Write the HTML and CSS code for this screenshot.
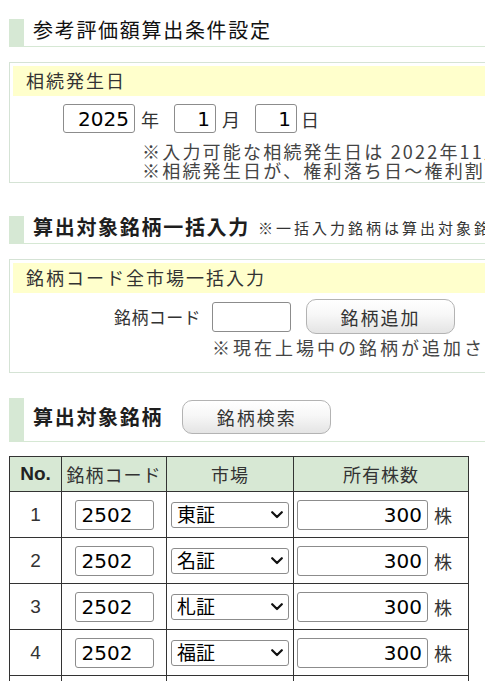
FILE: index.html
```html
<!DOCTYPE html>
<html lang="ja">
<head>
<meta charset="utf-8">
<title>参考評価額算出条件設定</title>
<link rel="stylesheet" href="styles.css">
</head>
<body>
<div class="page">
  <h2 class="heading h-first"><span class="heading-text light">参考評価額算出条件設定</span></h2>

  <div class="box box-date">
    <div class="box-title">相続発生日</div>
    <div class="date-row">
      <input class="field year" type="text" value="2025"><span class="unit">年</span>
      <input class="field md" type="text" value="1"><span class="unit">月</span>
      <input class="field md" type="text" value="1"><span class="unit tight">日</span>
    </div>
    <div class="notes">
      <p>※入力可能な相続発生日は 2022年11月1日〜2025年10月31日です。</p>
      <p>※相続発生日が、権利落ち日〜権利割当日の場合は、権利落ち前の株数を入力してください。</p>
    </div>
  </div>

  <h2 class="heading h-second"><span class="heading-text">算出対象銘柄一括入力</span><span class="heading-note">※一括入力銘柄は算出対象銘柄に追加されます。</span></h2>

  <div class="box box-code">
    <div class="box-title">銘柄コード全市場一括入力</div>
    <div class="code-row">
      <span class="code-label">銘柄コード</span>
      <input class="field code-bulk" type="text" value="">
      <button class="btn btn-add" type="button">銘柄追加</button>
    </div>
    <p class="code-note">※現在上場中の銘柄が追加されます。</p>
  </div>

  <h2 class="heading h-third"><span class="heading-text">算出対象銘柄</span><button class="btn btn-search" type="button">銘柄検索</button></h2>

  <table class="stocks">
    <colgroup>
      <col class="c-no"><col class="c-code"><col class="c-market"><col class="c-qty">
    </colgroup>
    <thead>
      <tr><th class="th-no">No.</th><th>銘柄コード</th><th>市場</th><th>所有株数</th></tr>
    </thead>
    <tbody>
      <tr>
        <td class="no">1</td>
        <td class="center"><input class="field code" type="text" value="2502"></td>
        <td><div class="sel"><select><option>東証</option><option>名証</option><option>札証</option><option>福証</option></select><svg class="chev" width="12" height="8" viewBox="0 0 12 8"><path d="M1.2 1.2 6 6 10.8 1.2" fill="none" stroke="#111" stroke-width="2.2" stroke-linecap="round" stroke-linejoin="round"/></svg></div></td>
        <td><div class="qty"><input class="field num" type="text" value="300"><span class="kabu">株</span></div></td>
      </tr>
      <tr>
        <td class="no">2</td>
        <td class="center"><input class="field code" type="text" value="2502"></td>
        <td><div class="sel"><select><option>名証</option><option>東証</option><option>札証</option><option>福証</option></select><svg class="chev" width="12" height="8" viewBox="0 0 12 8"><path d="M1.2 1.2 6 6 10.8 1.2" fill="none" stroke="#111" stroke-width="2.2" stroke-linecap="round" stroke-linejoin="round"/></svg></div></td>
        <td><div class="qty"><input class="field num" type="text" value="300"><span class="kabu">株</span></div></td>
      </tr>
      <tr>
        <td class="no">3</td>
        <td class="center"><input class="field code" type="text" value="2502"></td>
        <td><div class="sel"><select><option>札証</option><option>東証</option><option>名証</option><option>福証</option></select><svg class="chev" width="12" height="8" viewBox="0 0 12 8"><path d="M1.2 1.2 6 6 10.8 1.2" fill="none" stroke="#111" stroke-width="2.2" stroke-linecap="round" stroke-linejoin="round"/></svg></div></td>
        <td><div class="qty"><input class="field num" type="text" value="300"><span class="kabu">株</span></div></td>
      </tr>
      <tr>
        <td class="no">4</td>
        <td class="center"><input class="field code" type="text" value="2502"></td>
        <td><div class="sel"><select><option>福証</option><option>東証</option><option>名証</option><option>札証</option></select><svg class="chev" width="12" height="8" viewBox="0 0 12 8"><path d="M1.2 1.2 6 6 10.8 1.2" fill="none" stroke="#111" stroke-width="2.2" stroke-linecap="round" stroke-linejoin="round"/></svg></div></td>
        <td><div class="qty"><input class="field num" type="text" value="300"><span class="kabu">株</span></div></td>
      </tr>
      <tr>
        <td class="no">5</td>
        <td class="center"><input class="field code" type="text" value=""></td>
        <td><div class="sel"><select><option>東証</option><option>名証</option><option>札証</option><option>福証</option></select><svg class="chev" width="12" height="8" viewBox="0 0 12 8"><path d="M1.2 1.2 6 6 10.8 1.2" fill="none" stroke="#111" stroke-width="2.2" stroke-linecap="round" stroke-linejoin="round"/></svg></div></td>
        <td><div class="qty"><input class="field num" type="text" value=""><span class="kabu">株</span></div></td>
      </tr>
    </tbody>
  </table>
</div>
</body>
</html>
```

FILE: styles.css
```css
html, body {
  margin: 0;
  padding: 0;
  overflow: hidden;
  background: #fff;
}

body {
  font-family: "Noto Sans CJK JP", "Noto Sans", sans-serif;
  color: #333;
}

.page {
  width: 720px;
  padding: 0 0 40px 9px;
}

p {
  margin: 0;
}

/* headings */
.heading {
  margin: 0;
  border-left: 15px solid #d6e8d4;
  border-bottom: 1px solid #d6e8d4;
  padding-left: 9px;
  display: flex;
  align-items: center;
  font-weight: normal;
}

.heading-text {
  font-size: 20px;
  line-height: 22px;
  letter-spacing: 1.7px;
  font-weight: bold;
  color: #1e1e1e;
  white-space: nowrap;
}

.heading-text.light {
  font-weight: normal;
  color: #111;
}

.h-first {
  margin-top: 19px;
  height: 27px;
  align-items: flex-start;
}

.h-second {
  margin-top: 33px;
  height: 27px;
  align-items: flex-start;
}

.heading-note {
  font-size: 15px;
  line-height: 22px;
  letter-spacing: 3px;
  color: #333;
  margin-left: 8px;
  white-space: nowrap;
  padding-top: 1px;
}

.h-third {
  margin-top: 25px;
  padding-top: 2px;
  padding-bottom: 7px;
}

/* boxes */
.box {
  margin-top: 15px;
  border: 1px solid #d5e3d5;
  padding: 3px 0 0 3px;
}

.box-title {
  height: 30px;
  line-height: 28px;
  background: #ffffcc;
  padding-left: 13px;
  font-size: 18px;
  letter-spacing: 2px;
  color: #333;
  white-space: nowrap;
}

.box-date {
  padding-bottom: 2px;
}

.box-code {
  padding-bottom: 15px;
}

/* form fields */
.field {
  box-sizing: border-box;
  margin: 0;
  border: 1px solid #8c8c8c;
  border-radius: 3px;
  background: #fff;
  font-family: "DejaVu Sans", sans-serif;
  font-size: 20px;
  color: #000;
  padding: 0 5px;
  outline: none;
}

.date-row {
  margin-top: 8px;
  padding-left: 50px;
  display: flex;
  align-items: center;
}

.date-row .field {
  height: 29px;
  text-align: right;
}

.year {
  width: 72px;
}

.md {
  width: 42px;
}

.unit {
  font-size: 18px;
  line-height: 22px;
  color: #333;
  margin-left: 6px;
  margin-right: 15px;
}

.unit.tight {
  margin-left: 4px;
  margin-right: 0;
}

.notes {
  margin-top: 9px;
  padding-left: 129px;
  font-size: 18px;
  line-height: 19px;
  letter-spacing: 2.2px;
  color: #444;
  white-space: nowrap;
}

.code-row {
  margin-top: 6px;
  padding-left: 101px;
  display: flex;
  align-items: center;
  height: 35px;
}

.code-label {
  font-size: 17px;
  letter-spacing: 0.4px;
  color: #333;
  white-space: nowrap;
}

.code-bulk {
  width: 79px;
  height: 30px;
  margin-left: 11px;
}

.btn {
  box-sizing: border-box;
  margin: 0;
  border: 1px solid #b3b3b3;
  border-radius: 10px;
  background: linear-gradient(#ffffff 0%, #f7f7f7 45%, #e4e4e4 100%);
  font-family: "Noto Sans CJK JP", sans-serif;
  font-size: 18px;
  letter-spacing: 2px;
  color: #333;
  padding: 0;
}

.btn-add {
  width: 149px;
  height: 35px;
  margin-left: 15px;
}

.btn-search {
  width: 149px;
  height: 34px;
  margin-left: 19px;
  font-weight: normal;
}

.code-note {
  margin-top: 4px;
  padding-left: 199px;
  font-size: 18px;
  line-height: 19px;
  letter-spacing: 3px;
  color: #444;
  white-space: nowrap;
}

/* table */
.stocks {
  margin-top: 14px;
  border-collapse: collapse;
  table-layout: fixed;
  width: 459px;
}

.c-no { width: 52px; }
.c-code { width: 105px; }
.c-market { width: 127px; }
.c-qty { width: 175px; }

.stocks th,
.stocks td {
  border: 1px solid #333;
  padding: 0;
}

.stocks thead tr {
  height: 35px;
}

.stocks th {
  background: #d7e8d4;
  font-weight: normal;
  font-size: 18px;
  letter-spacing: 1px;
  color: #333;
  text-align: center;
  vertical-align: middle;
}

.stocks th.th-no {
  font-family: "Liberation Sans", Arial, sans-serif;
  font-weight: bold;
  font-size: 19px;
  letter-spacing: 0;
  color: #222;
}

.stocks tbody tr {
  height: 46px;
}

.stocks td {
  vertical-align: middle;
}

.stocks td.no {
  text-align: center;
  font-family: "Liberation Sans", Arial, sans-serif;
  font-size: 19px;
  color: #333;
}

.stocks td.center {
  text-align: center;
}

.code {
  width: 79px;
  height: 30px;
  display: block;
  margin: 0 auto;
  padding-left: 6px;
}

.sel {
  position: relative;
  width: 118px;
  height: 26px;
  margin-left: 4px;
}

.sel select {
  -webkit-appearance: none;
  appearance: none;
  box-sizing: border-box;
  width: 118px;
  height: 26px;
  margin: 0;
  border: 1px solid #8c8c8c;
  border-radius: 3px;
  background: #fff;
  font-family: "Noto Sans CJK JP", sans-serif;
  font-size: 19px;
  line-height: 22px;
  color: #000;
  padding: 0 0 1px 5px;
  outline: none;
}

.chev {
  position: absolute;
  right: 6px;
  top: 9px;
  pointer-events: none;
}

.qty {
  display: flex;
  align-items: center;
  padding-left: 3px;
}

.num {
  width: 131px;
  height: 30px;
  text-align: right;
}

.kabu {
  margin-left: 6px;
  font-size: 18px;
  color: #333;
}
```
